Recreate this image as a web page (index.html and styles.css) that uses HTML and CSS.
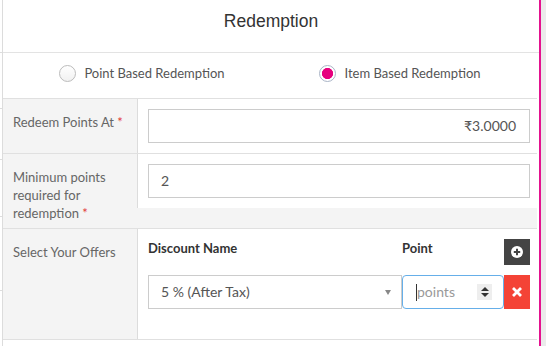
FILE: index.html
```html
<!DOCTYPE html>
<html>
<head>
<meta charset="utf-8">
<title>Redemption</title>
<link rel="stylesheet" href="styles.css">
</head>
<body>
<div class="page">
  <div class="gutter"></div>
  <div class="panel">
    <div class="header"><h2 class="title">Redemption</h2></div>
    <div class="body">
      <div class="radios">
        <label class="radio radio-left"><span class="dot"></span>Point Based Redemption</label>
        <label class="radio radio-right"><span class="dot checked"></span>Item Based Redemption</label>
      </div>
      <div class="row">
        <div class="label">Redeem Points At <span class="req">*</span></div>
        <div class="field"><div class="input input-end">₹3.0000</div></div>
      </div>
      <div class="row">
        <div class="label">Minimum points required for redemption <span class="req">*</span></div>
        <div class="field"><div class="input">2</div></div>
      </div>
      <div class="row">
        <div class="label">Select Your Offers</div>
        <div class="field field-offers">
          <div class="offers">
            <div class="col-head">Discount Name</div>
            <div class="col-head">Point</div>
            <div class="btn btn-add">
              <svg width="14" height="14" viewBox="-7 -7 14 14"><circle r="6" fill="#fff"/><path d="M-3.2 0H3.2M0 -3.2V3.2" stroke="#444" stroke-width="2"/></svg>
            </div>
            <div class="select"><span>5 % (After Tax)</span><span class="caret"></span></div>
            <div class="num"><span class="cursor"></span><span class="ph">points</span><span class="spin"><span class="up"></span><span class="down"></span></span></div>
            <div class="btn btn-del">
              <svg width="12" height="12" viewBox="-6 -6 12 12"><path d="M-4 -4L4 4M4 -4L-4 4" stroke="#fff" stroke-width="2.8"/></svg>
            </div>
          </div>
        </div>
      </div>
    </div>
  </div>
  <div class="pink"></div>
  <div class="rest"></div>
</div>
</body>
</html>
```

FILE: styles.css
```css
* { box-sizing: border-box; }
html, body { margin: 0; background: #fff; }
body {
  font-family: Lato, "Noto Sans", sans-serif;
  font-size: 13px;
  color: #555;
}
.page { display: flex; height: 346px; }
.gutter {
  width: 2px;
  flex: none;
  background:
    linear-gradient(#ddd, #ddd) 0 52px / 2px 1px no-repeat,
    linear-gradient(#ddd, #ddd) 0 108px / 2px 1px no-repeat,
    linear-gradient(#ddd, #ddd) 0 159px / 2px 1px no-repeat,
    linear-gradient(#ddd, #ddd) 0 216px / 2px 1px no-repeat,
    linear-gradient(#ddd, #ddd) 0 290px / 2px 1px no-repeat;
}
.panel { width: 537px; flex: none; border-left: 1px solid #dcdcdc; }
.pink { width: 2px; flex: none; background: #e4128f; }
.rest { flex: 1; background: #ebebeb; }

.header {
  height: 53px;
  padding-top: 11px;
  border-bottom: 1px solid #e3e3e3;
  text-align: center;
}
.title {
  margin: 0;
  font: 400 17.5px/20px "Liberation Sans", Arial, sans-serif;
  color: #333;
}
.body { margin-right: 2px; }

.radios {
  display: grid;
  grid-template-columns: 1fr 1fr;
  align-items: center;
  height: 46px;
  padding-bottom: 5px;
  border-bottom: 1px solid #e0e0e0;
}
.radio {
  display: flex;
  align-items: center;
  justify-content: center;
  gap: 8px;
  line-height: 18px;
  color: #555;
}
.radio-left { padding-left: 11px; }
.radio-right { padding-right: 7px; }
.dot {
  width: 17px;
  height: 17px;
  flex: none;
  border-radius: 50%;
  border: 1px solid #bcbcbc;
  background: linear-gradient(#fff, #f1f1f1);
}
.dot.checked {
  border-color: #a9b4c6;
  background: radial-gradient(circle, #e6007e 0 5.3px, #fff 5.9px);
}

.row {
  display: flex;
  align-items: flex-start;
  background: #f4f4f4;
  border-bottom: 1px solid #e0e0e0;
}
.label {
  width: 134px;
  flex: none;
  padding: 14px 10px 6px;
  line-height: 18px;
  color: #666;
}
.req { color: #e2403a; }
.field {
  flex: 1;
  background: #fff;
  border-left: 1px solid #dcdcdc;
  padding: 10px 7px 10px 10px;
}
.field-offers { padding-bottom: 30px; }

.input {
  height: 34px;
  border: 1px solid #ccc;
  padding: 0 12px;
  font-size: 14px;
  line-height: 32px;
  color: #555;
}
.input-end { text-align: right; padding-right: 13px; }

.offers {
  display: grid;
  grid-template-columns: 254px 102px 26px;
  grid-template-rows: 26px 34px;
  row-gap: 10px;
}
.col-head {
  font-weight: 700;
  line-height: 18px;
  color: #333;
}
.btn {
  display: flex;
  align-items: center;
  justify-content: center;
}
.btn-add { background: #444; }
.btn-del { background: #f44336; }

.select {
  display: flex;
  align-items: center;
  justify-content: space-between;
  border: 1px solid #ccc;
  padding: 0 10px 0 12px;
  font-size: 14px;
  line-height: 32px;
  color: #555;
}
.caret {
  width: 0;
  height: 0;
  border-left: 3.5px solid transparent;
  border-right: 3.5px solid transparent;
  border-top: 5px solid #888;
}
.num {
  display: flex;
  align-items: center;
  border: 1px solid #66afe9;
  border-radius: 4px;
  padding: 0 11px 0 13px;
  font-size: 14px;
}
.cursor { width: 1px; height: 17px; background: #333; flex: none; }
.ph { flex: 1; color: #999; line-height: 32px; }
.spin {
  width: 15px;
  height: 16px;
  background: #eee;
  display: flex;
  flex-direction: column;
  align-items: center;
  justify-content: center;
  gap: 2px;
}
.up, .down {
  width: 0;
  height: 0;
  border-left: 4px solid transparent;
  border-right: 4px solid transparent;
}
.up { border-bottom: 4px solid #333; }
.down { border-top: 4px solid #333; }
```
